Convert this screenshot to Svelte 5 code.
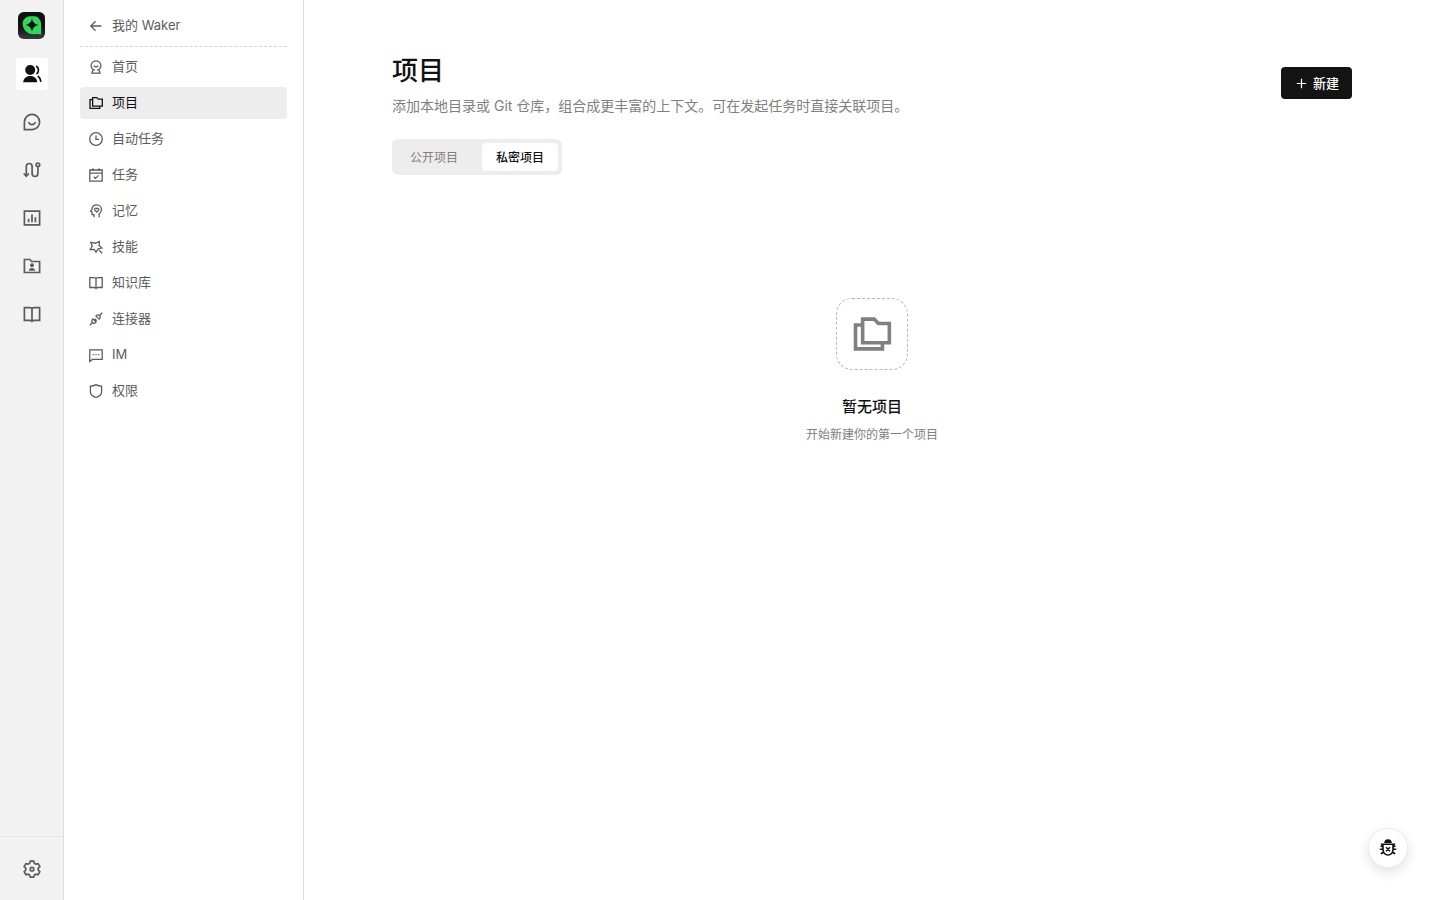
<script>
    let tab = $state('private')
    let current = $state('项目')

    const folders = 'M4.2 4.7H2v8.7h9.8v-2.1M4.6 2.6h4.2l1.5 1.6h4v7H4.6z'
    const book = 'M8 3.6v10.6M8 3.6C7.4 3 6.8 2.7 6 2.7H1.8v9.8H6.4c.9 0 1.6.4 1.6 1.2 0-.8.7-1.2 1.6-1.2h4.6V2.7H10c-.8 0-1.4.3-2 .9z'

    const rail = [
        { name: '对话', d: 'M2.4 17.6V10a7.6 7.6 0 1 1 7.6 7.6zM6.4 10.2c1.6 3.2 5.600 3.200 7.200 0' },
        { name: '流程', d: 'M4.3 16V6.4a2.9 2.9 0 0 1 5.8 0v7.2a2.9 2.9 0 0 0 5.8 0V6.600M1.700 13.500l2.600 2.800 2.600-2.800M14.100 4.800a1.800 1.800 0 1 0 3.600 0a1.800 1.800 0 1 0-3.600 0' },
        { name: '统计', d: 'M2.4 3.2h15.2v13.6H2.4zM6.6 10.8v3.4M10 6.6v7.6M13.4 9.2v5' },
        { name: '团队', d: 'M2.4 3.500h5.400l1.800 2h8v11H2.400z', fill: 'M8 9.200a2 2 0 1 0 4 0a2 2 0 1 0-4 0M6.800 14.800c0-3.600 6.400-3.600 6.400 0z' },
        { name: '文档', d: 'M10 4.2v13.6M2.4 3.7h5.4c1 0 1.7.3 2.2 1 .5-.7 1.2-1 2.2-1h5.4v12.6h-5.4c-1 0-1.7.3-2.2 1-.5-.7-1.2-1-2.2-1H2.4z' }
    ]

    const nav = [
        { name: '首页', d: 'M5 10.600a4.900 4.900 0 1 1 6 0l1 3.500H4zM5 10.800h2M9 10.800h2M5.800 6.600c1 1.600 3.400 1.600 4.400 0' },
        { name: '项目', d: folders },
        { name: '自动任务', d: 'M1.7 8a6.3 6.3 0 1 0 12.6 0a6.3 6.3 0 1 0-12.6 0M8 4.6V8.3h3' },
        { name: '任务', d: 'M1.8 3h12.4v11.2H1.8zM1.8 6.2h12.4M5 1.2V4M11 1.2V4M5.8 9.7l1.7 1.7 3-3' },
        { name: '记忆', d: 'M6 14.3v-2.600H4V9L2.600 8.200 4 6.100C4.200 3.400 6.200 1.800 8.600 1.800c2.800 0 4.900 2 4.900 4.700 0 2-1 3.300-2.400 4.300v3.500M8.700 9 6.800 7.100C6 5.900 7.600 4.400 8.700 5.700c1.100-1.300 2.700.2 1.900 1.400z' },
        { name: '技能', d: 'M7.6 4.200 11.400 2.500 11.100 6.600 13.800 9 10.200 9.800 8 13.300 6.300 10.500 2.200 10.600 4.200 7.300 2.800 3.300zM11.200 11.200l3 3' },
        { name: '知识库', d: book },
        { name: '连接器', d: 'M1.8 14.2l2.700-2.700M11.500 4.500l2.700-2.700M4.900 7.900l3.200 3.200c-1.200 1.400-2.600 1.500-3.600.4s-1-2.400.4-3.600zM7.900 4.900l3.200 3.200c1.400-1.200 1.500-2.600.4-3.600s-2.400-1-3.600.4zM6.200 9.200l1.500-1.500M7.200 10.200l1.500-1.500' },
        { name: 'IM', d: 'M1.8 2.8h12.4v9.6H4.5l-2.7 2zM4.7 7.6h1.2M7.4 7.6h1.2M10.1 7.6h1.2' },
        { name: '权限', d: 'M8 1.6C6.4 2.7 4.4 3.1 2.4 3.1v6.2c0 2.6 2.8 4.2 5.6 5.2 2.8-1 5.6-2.6 5.6-5.2V3.1C11.6 3.1 9.6 2.7 8 1.6z' }
    ]
</script>

<div class="app">
    <aside class="rail">
        <a class="logo" href="#home" aria-label="Waker">
            <svg viewBox="0 0 28 28">
                <defs>
                    <linearGradient id="shade" x2="0" y2="1">
                        <stop offset=".55" stop-color="#111113" />
                        <stop offset="1" stop-color="#3b3b3f" />
                    </linearGradient>
                </defs>
                <rect width="28" height="28" rx="6" fill="url(#shade)" />
                <path fill="#2fd857" d="M11.5 4.500h5.500c2 0 3.500.8 4.800 2.500 1.500 2 2.200 3.600 2.200 6v10.400l-5-.7c-5 1-9.300-.5-11.800-3.800C2.800 13 4.600 5.800 11.500 4.500z" />
                <path fill="#111113" d="M14.500 7q1 5.300 6.700 6.500-5.400 1-6.700 6.500-1.300-5.500-6.700-6.500 5.700-1.200 6.700-6.500z" />
            </svg>
        </a>
        <nav class="rail-nav">
            <a class="rail-item active" href="#waker" aria-label="Waker 列表">
                <svg viewBox="0 0 20 20">
                    <circle cx="8.2" cy="6" r="5" fill="currentColor" />
                    <path fill="currentColor" d="M1.2 18.2c.3-3.8 3-6.1 7-6.1s6.7 2.3 7 6.1z" />
                    <path d="M14.2 2c3 1.8 3 6.3.2 8M15.8 12c1.8 1.3 2.8 3.3 3.1 5.8" />
                </svg>
            </a>
            {#each rail as item}
                <a class="rail-item" href="#{item.name}" aria-label={item.name}>
                    <svg viewBox="0 0 20 20">
                        <path d={item.d} />
                        {#if item.fill}
                            <path class="solid" d={item.fill} />
                        {/if}
                    </svg>
                </a>
            {/each}
        </nav>
        <div class="rail-foot">
            <a class="rail-item" href="#settings" aria-label="设置">
                <svg viewBox="0 0 20 20">
                    <path d="M8.3 2.200h3.400l.7 2.200 1.400.8 2.300-.5 1.700 3-1.600 1.700v1.600l1.600 1.700-1.700 3-2.300-.5-1.400.8-.7 2.200H8.300l-.7-2.200-1.400-.8-2.300.5-1.700-3 1.600-1.700V9.400L2.200 7.700l1.700-3 2.300.5 1.400-.8z" />
                    <circle cx="10" cy="10.2" r="1.8" />
                </svg>
            </a>
        </div>
    </aside>

    <aside class="side">
        <a class="row back" href="#back">
            <svg viewBox="0 0 16 16"><path d="M13.5 8H3M7.500 3.300 2.800 8l4.700 4.700" /></svg>
            <span>我的 Waker</span>
        </a>
        <nav class="side-nav">
            {#each nav as item}
                <a class="row" class:active={current === item.name} href="#{item.name}" onclick={() => current = item.name}>
                    <svg viewBox="0 0 16 16"><path d={item.d} /></svg>
                    <span>{item.name}</span>
                </a>
            {/each}
        </nav>
    </aside>

    <main>
        <div class="content">
            <header>
                <div>
                    <h1>项目</h1>
                    <p>添加本地目录或 Git 仓库，组合成更丰富的上下文。可在发起任务时直接关联项目。</p>
                </div>
                <button class="create">
                    <svg viewBox="0 0 16 16"><path d="M8 3v10M3 8h10" /></svg>
                    <span>新建</span>
                </button>
            </header>
            <div class="tabs">
                <button class:active={tab === 'public'} onclick={() => tab = 'public'}>公开项目</button>
                <button class:active={tab === 'private'} onclick={() => tab = 'private'}>私密项目</button>
            </div>
            <section class="empty">
                <div class="empty-icon">
                    <svg viewBox="0 0 16 16"><path d={folders} /></svg>
                </div>
                <h2>暂无项目</h2>
                <p>开始新建你的第一个项目</p>
            </section>
        </div>
    </main>

    <button class="bug" aria-label="反馈问题">
        <svg viewBox="0 0 20 20">
            <path class="solid" d="M6.2 5a3.8 3.800 0 0 1 7.600 0z" />
            <path d="M2.8 6.200h14.400M5 6.500V12a5 5 0 0 0 10 0V6.500M1.800 11.200H5M15 11.200h3.200M5 9 2.600 7.800M15 9l2.400-1.200M5.500 14.200l-2.700 1.600M14.500 14.200l2.700 1.600M8 9.200l4 4M12 9.200l-4 4" />
        </svg>
    </button>
</div>

<style>
    :global(body) {
        margin: 0;
        background: #fff;
        font-family: Inter, "Noto Sans CJK SC", sans-serif;
    }
    .app {
        display: flex;
        min-height: 100vh;
        color: #111;
    }
    a {
        color: inherit;
        text-decoration: none;
    }
    button {
        border: 0;
        padding: 0;
        font-family: inherit;
        cursor: pointer;
    }
    h1, h2, p {
        margin: 0;
    }
    svg {
        display: block;
        flex: none;
        fill: none;
        stroke: currentColor;
        stroke-width: 1.3;
    }
    .solid {
        fill: currentColor;
        stroke: none;
    }

    .rail {
        box-sizing: border-box;
        flex: none;
        width: 64px;
        display: flex;
        flex-direction: column;
        background: #f2f2f2;
        border-right: 1px solid #dcdcdc;
    }
    .logo {
        align-self: center;
        padding: 12px 0 19px;
    }
    .logo svg {
        width: 27px;
        height: 27px;
        stroke: none;
    }
    .rail-nav {
        display: flex;
        flex-direction: column;
        gap: 16px;
        padding-left: 16px;
    }
    .rail-item {
        width: 32px;
        height: 32px;
        display: grid;
        place-items: center;
        border-radius: 4px;
        color: #5c5c5c;
    }
    .rail-item svg {
        width: 20px;
        height: 20px;
        stroke-width: 1.7;
    }
    .rail-item.active {
        background: #fff;
        color: #111;
    }
    .rail-item.active circle, .rail-item.active path[fill] {
        stroke: none;
    }
    .rail-foot {
        margin-top: auto;
        border-top: 1px solid #e4e4e4;
        padding: 16px 0 15px 16px;
    }

    .side {
        box-sizing: border-box;
        flex: none;
        width: 240px;
        padding: 10px 16px;
        border-right: 1px solid #dcdcdc;
    }
    .row {
        display: flex;
        align-items: center;
        gap: 8px;
        height: 32px;
        padding: 0 8px;
        border-radius: 4px;
        font-size: 13px;
        line-height: 20px;
        color: #5c5c5c;
    }
    .row svg {
        width: 16px;
        height: 16px;
    }
    .row span, .create span {
        padding-bottom: 2px;
    }
    .row.active {
        background: #ededed;
        color: #111;
    }
    .side-nav {
        display: flex;
        flex-direction: column;
        gap: 4px;
        margin-top: 4px;
        padding-top: 4px;
        border-top: 1px dashed #d4d4d4;
    }

    main {
        flex: 1;
        min-width: 0;
        padding: 48px 32px;
    }
    .content {
        max-width: 960px;
        margin: 0 auto;
    }
    header {
        display: flex;
        align-items: center;
        justify-content: space-between;
        gap: 24px;
    }
    h1 {
        font-size: 26px;
        line-height: 46px;
        font-weight: 500;
    }
    header p {
        margin: 2px 0;
        font-size: 14px;
        line-height: 20px;
        color: #808080;
    }
    .create {
        display: flex;
        align-items: center;
        gap: 4px;
        height: 32px;
        padding: 0 13px;
        border-radius: 4px;
        background: #141414;
        color: #fff;
        font-size: 13px;
        font-weight: 500;
    }
    .create svg {
        width: 15px;
        height: 15px;
    }
    .tabs {
        display: inline-flex;
        gap: 10px;
        margin-top: 21px;
        padding: 4px;
        border-radius: 6px;
        background: #ededed;
    }
    .tabs button {
        width: 76px;
        height: 28px;
        padding-bottom: 2px;
        border-radius: 4px;
        background: none;
        color: #808080;
        font-size: 12px;
    }
    .tabs button.active {
        background: #fff;
        color: #111;
        font-weight: 500;
    }
    .empty {
        display: flex;
        flex-direction: column;
        align-items: center;
        padding-top: 123px;
    }
    .empty-icon {
        box-sizing: border-box;
        width: 72px;
        height: 72px;
        display: grid;
        place-items: center;
        border: 1px dashed #b8b8b8;
        border-radius: 16px;
        color: #808080;
    }
    .empty-icon svg {
        width: 44px;
        height: 44px;
    }
    h2 {
        margin-top: 25px;
        font-size: 15px;
        line-height: 24px;
        font-weight: 500;
    }
    .empty p {
        margin-top: 6px;
        font-size: 12px;
        line-height: 20px;
        color: #808080;
    }
    .bug {
        position: fixed;
        right: 32px;
        bottom: 32px;
        width: 40px;
        height: 40px;
        display: grid;
        place-items: center;
        border: 1px solid #ebebeb;
        border-radius: 50%;
        background: #fff;
        color: #111;
        box-shadow: 0 4px 12px rgba(0, 0, 0, .12);
    }
    .bug svg {
        width: 20px;
        height: 20px;
        stroke-width: 1.6;
    }
</style>
